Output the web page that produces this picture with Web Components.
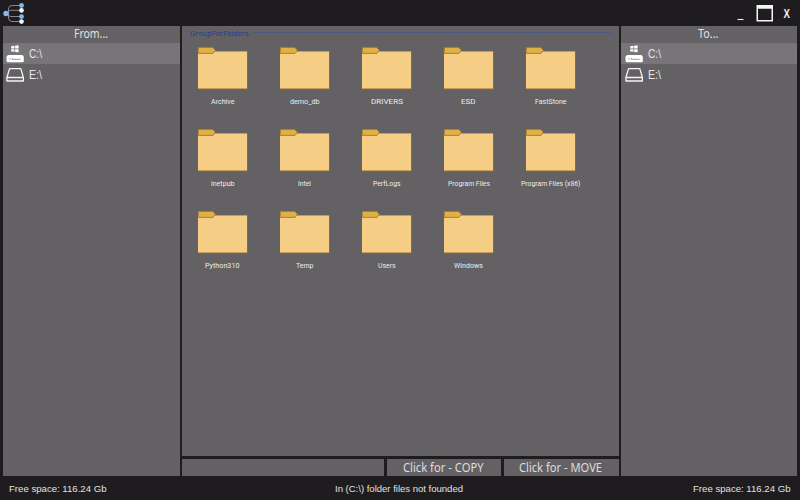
<!DOCTYPE html>
<html lang="en">
<head>
<meta charset="utf-8">
<title>File transfer</title>
<style>
html,body{margin:0;width:800px;height:500px;overflow:hidden;background:#1e1c1f}
</style>
</head>
<body>
<file-app></file-app>
<script>
// One line of text set to an exact width.
class FitText extends HTMLElement {
  connectedCallback() {
    const w = +this.getAttribute('w'), s = +this.getAttribute('size');
    const h = Math.ceil(s * 1.5);
    this.attachShadow({mode: 'open'}).innerHTML = `<style>
      :host{display:block;width:${w}px;height:${h}px;flex:none}
      svg{display:block;overflow:visible} text{font-size:${s}px;fill:currentColor}
      </style><svg width="${w}" height="${h}"><text x="0" y="${s}" textLength="${w}" lengthAdjust="spacingAndGlyphs"></text></svg>`;
    this.shadowRoot.querySelector('text').textContent = this.getAttribute('text');
  }
}
customElements.define('fit-text', FitText);

class TitleBar extends HTMLElement {
  connectedCallback() {
    this.attachShadow({mode: 'open'}).innerHTML = `<style>
      :host{display:flex;justify-content:space-between;height:26px;box-sizing:border-box}
      svg{display:block}
      .tree{margin-left:2px}
      </style>
      <svg class="tree" width="26" height="26" viewBox="2 0 26 26" fill="none">
        <path d="M20 5.5H12Q8.5 5.5 8.5 9V18Q8.5 21.5 12 21.5H20M8.5 11.8Q9 10.3 11 10.3H20M8.5 15Q9 16.5 11 16.5H20" stroke="#8b888c"/>
        <circle cx="6" cy="13.5" r="2.7" fill="#80b9f2"/><circle cx="21.5" cy="5.5" r="2.4" fill="#80b9f2"/>
        <circle cx="21.5" cy="10.4" r="2.3" fill="#f8fafc"/><circle cx="21.5" cy="16.6" r="2.4" fill="#80b9f2"/>
        <circle cx="21.5" cy="21.6" r="2.3" fill="#f8fafc"/>
      </svg>
      <svg width="70" height="26" viewBox="730 0 70 26">
        <path d="M737.5 19.5H743.5" stroke="#eee" stroke-width="1.1"/>
        <path fill="#f5f5f5" fill-rule="evenodd" d="M756.5 5H773V21.5H756.5ZM758 8.8V20H771.5V8.8Z"/>
        <text x="783.6" y="17.8" textLength="6.4" lengthAdjust="spacingAndGlyphs" fill="#f0f0f0" font-family="Liberation Sans,sans-serif" font-weight="bold" font-size="12.5">X</text>
      </svg>`;
  }
}
customElements.define('title-bar', TitleBar);

class DriveRow extends HTMLElement {
  connectedCallback() {
    const sys = this.hasAttribute('system');
    const icon = sys
      ? `<path fill="#fff" d="M5.2 3.3L8.4 2.8V5.4H5.2ZM9.1 2.7L12.6 2.2V5.4H9.1ZM5.2 6.2H8.4V8.8L5.2 8.4ZM9.1 6.2H12.6V9.3L9.1 8.9Z"/>
         <path fill="#fff" d="M2.5 12H16Q17.8 12.5 17.8 14V18Q17.8 19.3 16.5 19.3H2Q.5 19.3 .5 18V14Q.5 12.5 2.5 12Z"/>
         <path d="M4 15V16.6M6.4 15V16.6M6.4 16.3H14.6" stroke="#858387" fill="none" stroke-width=".8"/>`
      : `<path fill="none" stroke="#f4f4f4" stroke-width="1.3" stroke-linejoin="round" d="M3.6 4.6H14.8L17.4 13.5V17H.9V13.5ZM.9 13.5H17.4"/>`;
    this.attachShadow({mode: 'open'}).innerHTML = `<style>
      :host{display:flex;height:21px;gap:4.5px;padding-left:var(--row-indent,4px);box-sizing:border-box;color:#e6e6e6;font-family:"Liberation Sans",sans-serif}
      :host([system]){background:#777578}
      svg{display:block;flex:none}
      fit-text{margin-top:${sys ? 2.6 : 3}px}
      </style><svg width="18" height="21" viewBox="0 0 18 21">${icon}</svg>
      <fit-text text="${this.getAttribute('name')}" w="13" size="12"></fit-text>`;
  }
}
customElements.define('drive-row', DriveRow);

class DrivePanel extends HTMLElement {
  connectedCallback() {
    this.attachShadow({mode: 'open'}).innerHTML = `<style>
      :host{display:block;background:#636164}
      header{height:17px;display:flex;justify-content:center;padding-right:1px;color:#e0e0e0;font-family:"Noto Sans","Open Sans",sans-serif}
      </style><header><slot name="heading"></slot></header><slot></slot>`;
  }
}
customElements.define('drive-panel', DrivePanel);

class FolderItem extends HTMLElement {
  connectedCallback() {
    this.attachShadow({mode: 'open'}).innerHTML = `<style>
      :host{display:flex;flex-direction:column;align-items:center;width:82px;height:82px;color:#ededed;font-family:Roboto,"Open Sans",sans-serif}
      svg{display:block;margin-bottom:6px}
      fit-text{margin-right:1px}
      </style><svg width="52" height="44" viewBox="0 0 52 44">
        <path fill="#94682b" d="M.8 5H51V43.4H.8Z"/><path fill="#f6cd84" d="M1 5.6H50V42.4H1Z"/>
        <path fill="#deb047" stroke="#93691f" stroke-width=".7" d="M1.2 1.3H15.6L18.5 4.2L16 7.4H1.2Z"/>
      </svg><fit-text text="${this.getAttribute('name')}" w="${this.getAttribute('w')}" size="8"></fit-text>`;
  }
}
customElements.define('folder-item', FolderItem);

class FolderGroup extends HTMLElement {
  connectedCallback() {
    this.attachShadow({mode: 'open'}).innerHTML = `<style>
      :host{display:block;background:#636164}
      header{display:flex;align-items:flex-start;gap:4px;padding:2px 6.5px 0 8px;height:20px;box-sizing:border-box;color:#1c3f98;font-family:"Open Sans","Noto Sans",sans-serif}
      hr{flex:1;border:0;height:1px;margin:4px 0 0;background:#4a5a83}
      .grid{display:grid;grid-template-columns:repeat(5,82px);grid-auto-rows:82px;}
      </style><header><fit-text text="GroupForFolders" w="58.5" size="8"></fit-text><hr></header>
      <div class="grid"><slot></slot></div>`;
  }
}
customElements.define('folder-group', FolderGroup);

class ActionButton extends HTMLElement {
  connectedCallback() {
    this.attachShadow({mode: 'open'}).innerHTML = `<style>
      :host{display:flex;justify-content:center;background:#636164;color:#dedede;font-family:"Noto Sans","Open Sans",sans-serif;height:17px;overflow:hidden;padding:1px 2px 0 0;box-sizing:border-box}
      </style><slot></slot>`;
  }
}
customElements.define('action-button', ActionButton);

class FileApp extends HTMLElement {
  connectedCallback() {
    const folders = [['Archive',23.5],['demo_db',29.5],['DRIVERS',32],['ESD',14.5],['FastStone',31.5],
      ['inetpub',23.5],['Intel',13],['PerfLogs',27.5],['Program Files',42],['Program Files (x86)',59.5],
      ['Python310',34.5],['Temp',17.5],['Users',17.5],['Windows',29]];
    const drives = '<drive-row system name="C:\\"></drive-row><drive-row name="E:\\"></drive-row>';
    this.attachShadow({mode: 'open'}).innerHTML = `<style>
      :host{display:flex;flex-direction:column;width:800px;height:500px;background:#1e1c1f}
      main{display:grid;grid-template-columns:176.5px 436.5px 176px;column-gap:2.5px;padding-left:3px;height:450px}
      .from{--row-indent:3.2px}
      .mid{display:grid;grid-template-rows:430px 17px;row-gap:3px}
      .actions{display:grid;grid-template-columns:202px 114.5px 114.5px;column-gap:2.75px}
      footer{display:flex;justify-content:space-between;padding:6px 9.8px 0 8.5px;color:#e2e2e2;font-family:"Liberation Sans",sans-serif}
      </style>
      <title-bar></title-bar>
      <main>
        <drive-panel class="from"><fit-text slot="heading" text="From..." w="34" size="12"></fit-text>${drives}</drive-panel>
        <div class="mid">
          <folder-group>${folders.map(([n, w]) => `<folder-item name="${n}" w="${w}"></folder-item>`).join('')}</folder-group>
          <div class="actions"><action-button></action-button>
            <action-button><fit-text text="Click for - COPY" w="80.5" size="12"></fit-text></action-button>
            <action-button><fit-text text="Click for - MOVE" w="83" size="12"></fit-text></action-button></div>
        </div>
        <drive-panel><fit-text slot="heading" text="To..." w="20.5" size="12"></fit-text>${drives}</drive-panel>
      </main>
      <footer><fit-text text="Free space: 116.24 Gb" w="97.5" size="9.5"></fit-text>
        <fit-text text="In (C:\\) folder files not founded" w="128" size="9.5"></fit-text>
        <fit-text text="Free space: 116.24 Gb" w="97.5" size="9.5"></fit-text></footer>`;
  }
}
customElements.define('file-app', FileApp);
</script>
</body>
</html>
